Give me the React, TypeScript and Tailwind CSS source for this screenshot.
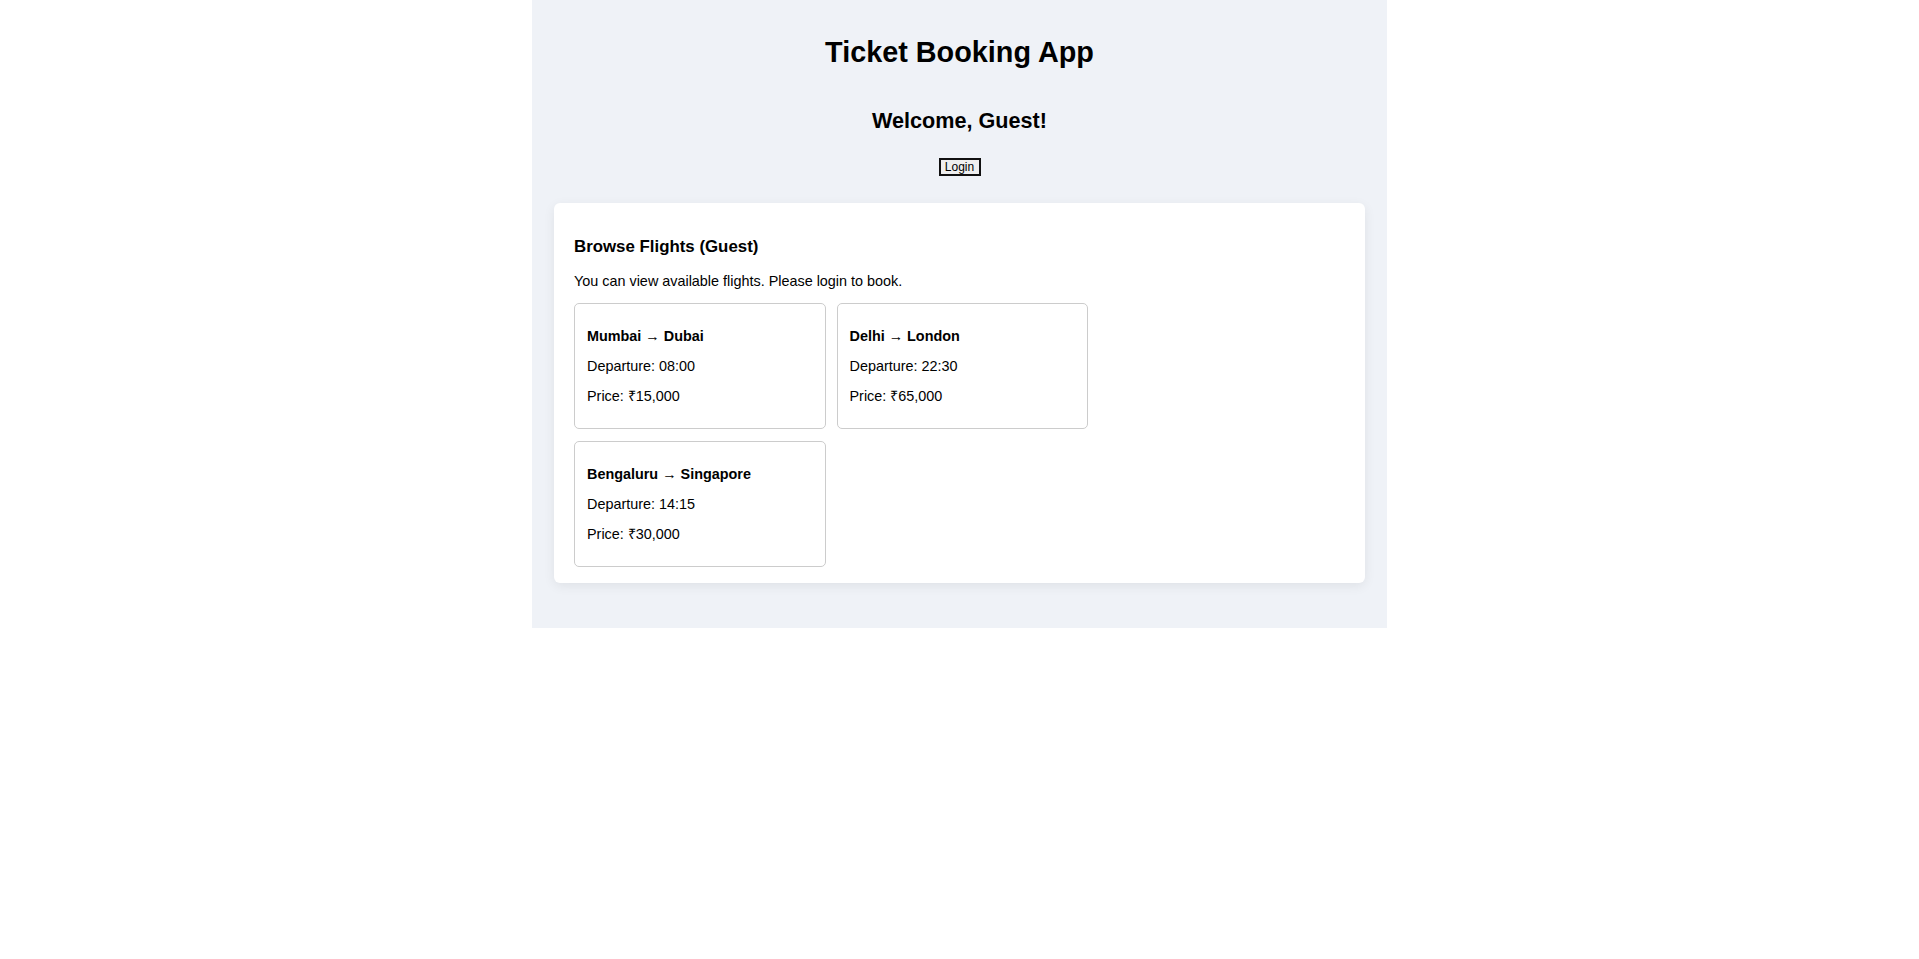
import React from "react";

type Flight = {
  from: string;
  to: string;
  departure: string;
  price: string;
};

const flights: Flight[] = [
  { from: "Mumbai", to: "Dubai", departure: "08:00", price: "₹15,000" },
  { from: "Delhi", to: "London", departure: "22:30", price: "₹65,000" },
  { from: "Bengaluru", to: "Singapore", departure: "14:15", price: "₹30,000" },
];

function FlightCard({ flight }: { flight: Flight }) {
  return (
    <div className="w-[251.5px] border border-[#cccccc] rounded-[5px] bg-white px-3 pt-[23.5px] pb-[23.5px] flex flex-col gap-[13.7px]">
      <h4 className="font-bold leading-[16.5px]">
        {flight.from} → {flight.to}
      </h4>
      <p className="leading-[16.5px]">Departure: {flight.departure}</p>
      <p className="leading-[16.5px]">Price: {flight.price}</p>
    </div>
  );
}

export default function App() {
  return (
    <div className="min-h-screen bg-white font-['Liberation_Sans',Arial,sans-serif] text-black">
      <div className="w-[855px] mx-auto bg-[#eff2f7] px-[22px] pb-[45px] text-[14.4px]">
        {/* Header */}
        <div className="flex flex-col items-center">
          <h1 className="mt-[36px] text-[28.8px] leading-[33px] font-bold">Ticket Booking App</h1>
          <h2 className="mt-[38.5px] text-[21.6px] leading-[25px] font-bold">Welcome, Guest!</h2>
          <button className="mt-[25.5px] w-[42px] h-[18px] border-2 border-[#111111] bg-[#efefef] text-[12px] leading-none flex items-center justify-center">
            Login
          </button>
        </div>

        {/* Browse panel */}
        <div className="mt-[26.5px] bg-white rounded-[6px] shadow-[0_3px_12px_rgba(0,0,0,0.07)] px-5 pt-[34px] pb-4">
          <h3 className="text-[16.85px] leading-[19.4px] font-bold">Browse Flights (Guest)</h3>
          <p className="mt-[16.8px] leading-[16.5px]">You can view available flights. Please login to book.</p>
          <div className="mt-[14px] flex flex-wrap gap-x-[11px] gap-y-[12.3px]">
            {flights.map((f) => (
              <FlightCard key={f.from} flight={f} />
            ))}
          </div>
        </div>
      </div>
    </div>
  );
}
